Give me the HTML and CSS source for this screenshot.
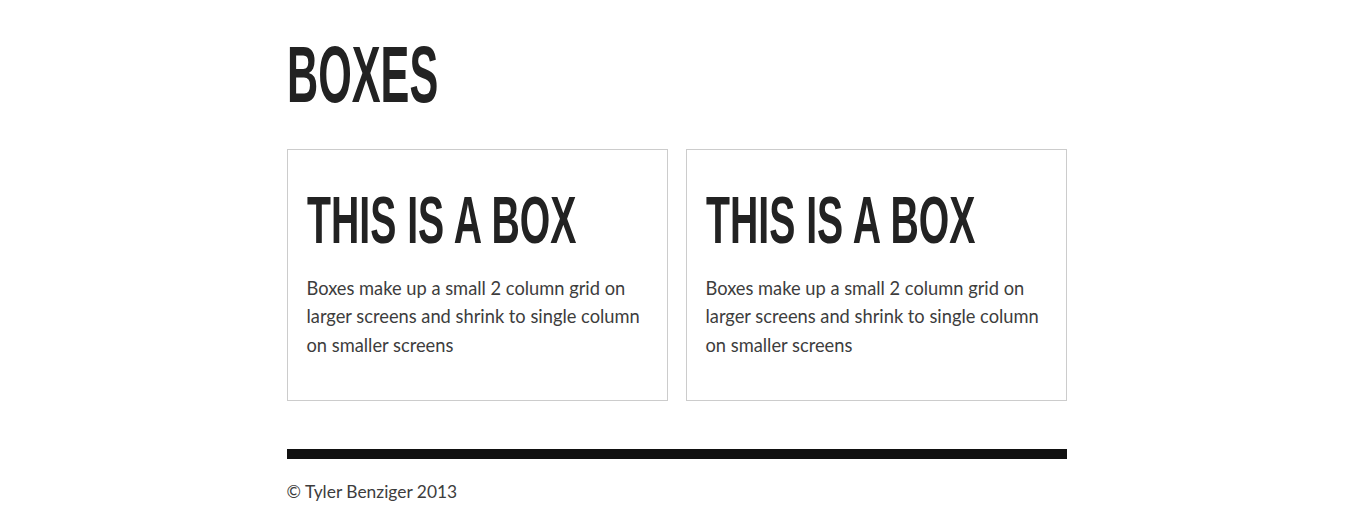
FILE: index.html
```html
<!DOCTYPE html>
<html>
<head>
<meta charset="utf-8">
<link rel="stylesheet" href="styles.css">
</head>
<body>
<div class="page">
  <h1 class="title"><span class="squeeze">Boxes</span></h1>
  <div class="grid">
    <div class="box">
      <h2 class="box-title"><span class="squeeze">This is a box</span></h2>
      <p class="box-text">Boxes make up a small 2 column grid on larger screens and shrink to single column on smaller screens</p>
    </div>
    <div class="box">
      <h2 class="box-title"><span class="squeeze">This is a box</span></h2>
      <p class="box-text">Boxes make up a small 2 column grid on larger screens and shrink to single column on smaller screens</p>
    </div>
  </div>
  <div class="footer">
    <div class="rule"></div>
    <p class="copy">© Tyler Benziger 2013</p>
  </div>
</div>
</body>
</html>
```

FILE: styles.css
```css
html, body {
  margin: 0;
  padding: 0;
  background: #fff;
}
body {
  font-family: Lato, "Liberation Sans", sans-serif;
  color: #3d3d3d;
}
.page {
  width: 780px;
  margin: 0 auto;
  padding-top: 35px;
  box-sizing: border-box;
}
.title, .box-title {
  font-family: "Liberation Sans", sans-serif;
  font-weight: 700;
  text-transform: uppercase;
  color: #222;
  margin: 0;
  white-space: nowrap;
}
.squeeze {
  display: inline-block;
  transform-origin: 0 0;
}
.title {
  font-size: 80px;
  line-height: 80px;
  height: 80px;
}
.title .squeeze {
  transform: scaleX(0.54);
}
.grid {
  display: grid;
  grid-template-columns: 381px 381px;
  column-gap: 18px;
  margin-top: 34px;
}
.box {
  border: 1px solid #ccc;
  padding: 18px 18px 18px 19px;
}
.box-title {
  font-size: 67px;
  line-height: 67px;
  height: 67px;
  margin-top: 18px;
}
.box-title .squeeze {
  transform: scaleX(0.585);
}
.box-text {
  font-size: 18.3px;
  line-height: 28.5px;
  margin: 20.5px 0 23px 0;
}
.footer {
  margin-top: 48px;
}
.rule {
  height: 10px;
  background: #111;
}
.copy {
  margin: 21px 0 0 0;
  font-size: 17.4px;
  line-height: 24px;
}
```
